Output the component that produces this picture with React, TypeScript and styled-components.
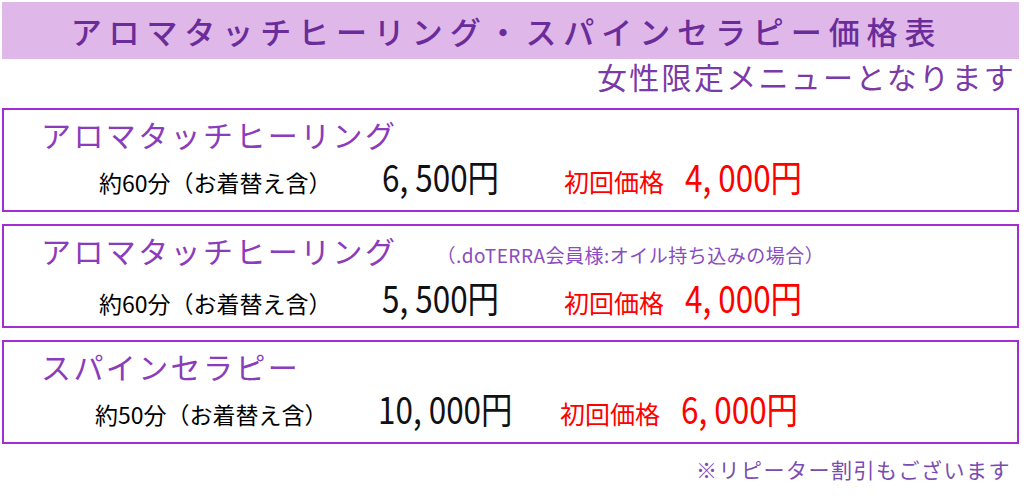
import React from "react";
import styled, { createGlobalStyle } from "styled-components";

const GlobalStyle = createGlobalStyle`
    body {
        margin: 0;
        background: #ffffff;
        font-family: "Noto Sans CJK JP", "Noto Sans", sans-serif;
    }
`;

const Page = styled.main`
    width: 1017px;
    padding: 2px 2px 0;
    display: flex;
    flex-direction: column;
`;

const HeaderBand = styled.header`
    height: 57px;
    background: #dfb7e8;
    display: flex;
    align-items: center;
    justify-content: center;
    padding-right: 8px;
`;

const MainTitle = styled.h1`
    margin: 0;
    font-size: 31px;
    font-weight: 500;
    letter-spacing: 6.9px;
    color: #6a2c9a;
    line-height: 40px;
`;

const Subtitle = styled.p`
    margin: 0 0 15px;
    text-align: right;
    padding-right: 3px;
    font-size: 30px;
    line-height: 34px;
    letter-spacing: 2.3px;
    color: #7a3aa8;
`;

const MenuList = styled.section`
    display: flex;
    flex-direction: column;
    gap: 12px;
`;

const MenuBox = styled.div`
    box-sizing: border-box;
    height: 104px;
    border: 2px solid #a52bd3;
    padding: 4px 0 0 37px;
    display: flex;
    flex-direction: column;
`;

const TitleRow = styled.div`
    display: flex;
    align-items: baseline;
    gap: 39px;
    line-height: 40px;
`;

const MenuName = styled.h2`
    margin: 0;
    font-size: 30px;
    font-weight: 400;
    letter-spacing: 2.4px;
    color: #8a3cbc;
`;

const Note = styled.span`
    font-size: 19px;
    letter-spacing: 0.5px;
    color: #8a4cbf;
`;

const DetailRow = styled.div<{ $indent: number }>`
    display: grid;
    grid-template-columns: 283px 182px 121px 1fr;
    align-items: baseline;
    padding-left: ${(p) => p.$indent}px;
    line-height: 44px;
`;

const Duration = styled.span`
    font-size: 23px;
    color: #000000;
`;

const Price = styled.span<{ $red?: boolean }>`
    display: inline-block;
    font-size: 37px;
    color: ${(p) => (p.$red ? "#ff0000" : "#111111")};
    transform: scaleX(0.85);
    transform-origin: left center;
    white-space: pre;
`;

const FirstLabel = styled.span`
    font-size: 25px;
    color: #ff0000;
`;

const Footnote = styled.p`
    margin: 11px 0 0;
    text-align: right;
    padding-right: 8px;
    font-size: 21px;
    line-height: 28px;
    letter-spacing: 1.5px;
    color: #7a4cb0;
`;

const menus = [
    {
        name: "アロマタッチヒーリング",
        duration: "約60分（お着替え含）",
        price: "6, 500円",
        first: "4, 000円",
        indent: 58,
    },
    {
        name: "アロマタッチヒーリング",
        note: "（.doTERRA会員様:オイル持ち込みの場合）",
        duration: "約60分（お着替え含）",
        price: "5, 500円",
        first: "4, 000円",
        indent: 58,
    },
    {
        name: "スパインセラピー",
        duration: "約50分（お着替え含）",
        price: "10, 000円",
        first: "6, 000円",
        indent: 54,
    },
];

function App() {
    return (
        <Page>
            <GlobalStyle />
            <HeaderBand>
                <MainTitle>アロマタッチヒーリング・スパインセラピー価格表</MainTitle>
            </HeaderBand>
            <Subtitle>女性限定メニューとなります</Subtitle>
            <MenuList>
                {menus.map((menu, x) => (
                    <MenuBox key={x}>
                        <TitleRow>
                            <MenuName>{menu.name}</MenuName>
                            {menu.note && <Note>{menu.note}</Note>}
                        </TitleRow>
                        <DetailRow $indent={menu.indent}>
                            <Duration>{menu.duration}</Duration>
                            <Price>{menu.price}</Price>
                            <FirstLabel>初回価格</FirstLabel>
                            <Price $red>{menu.first}</Price>
                        </DetailRow>
                    </MenuBox>
                ))}
            </MenuList>
            <Footnote>※リピーター割引もございます</Footnote>
        </Page>
    );
}

export default App;
